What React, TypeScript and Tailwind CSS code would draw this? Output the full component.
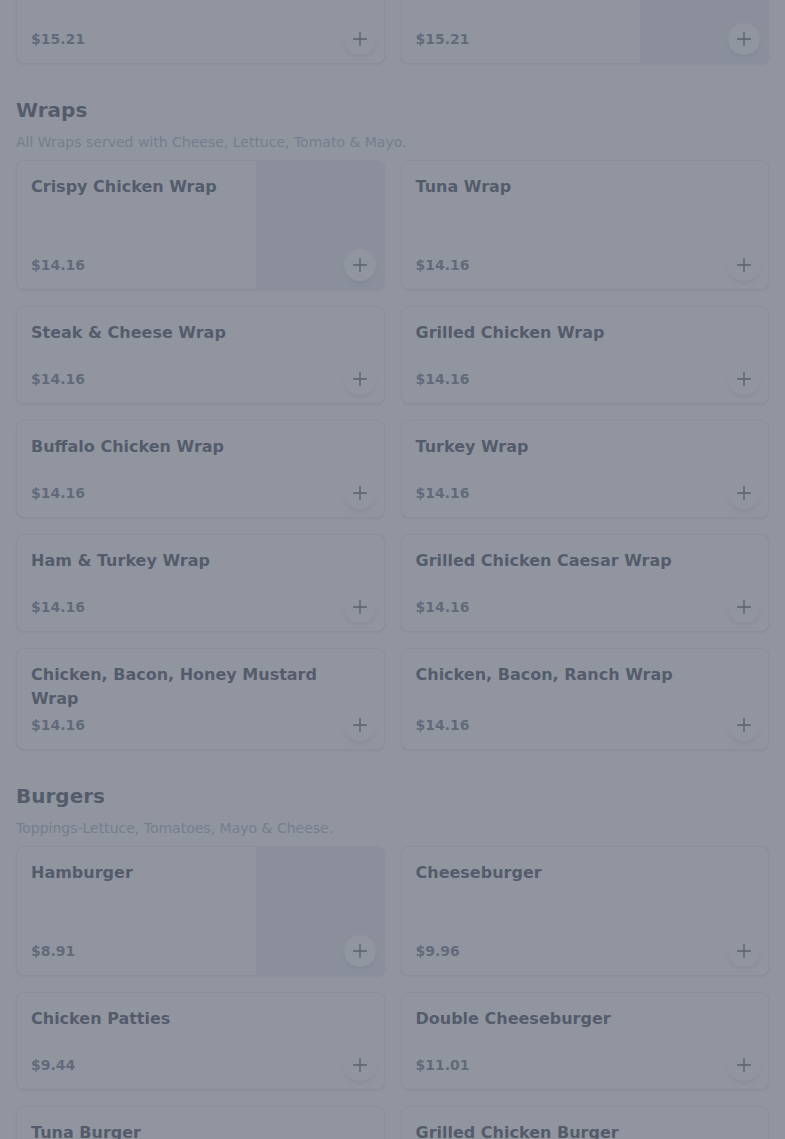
import React from "react";
import { Plus } from "lucide-react";

type Item = { name: string; price: string; image?: boolean };
type Section = { title?: string; note?: string; items: Item[] };

const sections: Section[] = [
  {
    items: [
      { name: "Chicken Cheesesteak", price: "$15.21" },
      { name: "Philly Cheesesteak", price: "$15.21", image: true },
    ],
  },
  {
    title: "Wraps",
    note: "All Wraps served with Cheese, Lettuce, Tomato & Mayo.",
    items: [
      { name: "Crispy Chicken Wrap", price: "$14.16", image: true },
      { name: "Tuna Wrap", price: "$14.16" },
      { name: "Steak & Cheese Wrap", price: "$14.16" },
      { name: "Grilled Chicken Wrap", price: "$14.16" },
      { name: "Buffalo Chicken Wrap", price: "$14.16" },
      { name: "Turkey Wrap", price: "$14.16" },
      { name: "Ham & Turkey Wrap", price: "$14.16" },
      { name: "Grilled Chicken Caesar Wrap", price: "$14.16" },
      { name: "Chicken, Bacon, Honey Mustard Wrap", price: "$14.16" },
      { name: "Chicken, Bacon, Ranch Wrap", price: "$14.16" },
    ],
  },
  {
    title: "Burgers",
    note: "Toppings-Lettuce, Tomatoes, Mayo & Cheese.",
    items: [
      { name: "Hamburger", price: "$8.91", image: true },
      { name: "Cheeseburger", price: "$9.96" },
      { name: "Chicken Patties", price: "$9.44" },
      { name: "Double Cheeseburger", price: "$11.01" },
      { name: "Tuna Burger", price: "$9.44" },
      { name: "Grilled Chicken Burger", price: "$10.49" },
    ],
  },
];

const ItemCard = ({ item }: { item: Item }) => (
  <div className="relative flex overflow-hidden rounded-lg border border-gray-200 bg-white shadow-sm">
    <div className="flex min-w-0 flex-1 flex-col p-3.5">
      <h3 className="min-h-11 text-base font-bold leading-6 text-gray-900">{item.name}</h3>
      <p className="mt-auto pt-1 text-sm font-bold leading-5 text-gray-600">{item.price}</p>
    </div>
    {item.image && <div className="h-32 w-32 shrink-0 bg-gray-200" />}
    <button
      aria-label="Add"
      className="absolute bottom-2 right-2 flex h-8 w-8 items-center justify-center rounded-full bg-white text-gray-800 shadow-md"
    >
      <Plus size={22} strokeWidth={1.5} />
    </button>
  </div>
);

const App = () => {
  return (
    <div
      className="relative min-h-screen bg-white px-4 pb-10"
      style={{ fontFamily: '"DejaVu Sans", sans-serif' }}
    >
      {sections.map((section, i) => (
        <section key={i} className={i === 0 ? "-mt-[66px]" : "mt-8"}>
          {section.title && (
            <>
              <h2 className="text-xl font-bold leading-7 text-gray-900">{section.title}</h2>
              <p className="mt-2 text-sm leading-5 text-gray-400">{section.note}</p>
            </>
          )}
          <div className={`grid grid-cols-2 gap-4 ${section.title ? "mt-2" : ""}`}>
            {section.items.map((item) => (
              <ItemCard key={item.name} item={item} />
            ))}
          </div>
        </section>
      ))}

      {/* modal backdrop */}
      <div className="fixed inset-0 bg-[#6b7280]/75" />
    </div>
  );
};

export default App;
